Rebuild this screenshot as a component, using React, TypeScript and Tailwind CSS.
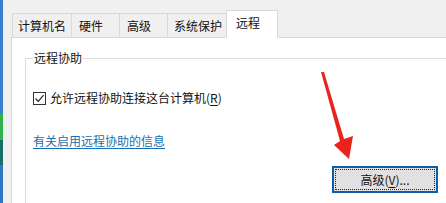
import React from "react";

const tabs = [
  { label: "计算机名", w: "w-[59px]", pl: "pl-[5px]" },
  { label: "硬件", w: "w-[48px]", pl: "pl-[7px]" },
  { label: "高级", w: "w-[48px]", pl: "pl-[7px]" },
  { label: "系统保护", w: "w-[59px]", pl: "pl-[6px]" },
];

export default function App() {
  return (
    <div className="relative flex h-[203px] w-[446px] overflow-hidden bg-[#f0f0f0] font-['Noto_Sans_CJK_SC',sans-serif] text-[12px] text-[#111]">
      {/* desktop edge behind the dialog */}
      <div className="flex w-[3px] shrink-0 flex-col">
        <div className="h-[113px] bg-[#3a7fce]" />
        <div className="h-[27px] bg-[#2fb24c]" />
        <div className="h-[25px] bg-[#166e68]" />
        <div className="flex-1 bg-[#2f78c6]" />
      </div>

      <div className="flex min-w-0 flex-1 flex-col pl-[8px] pt-[10px]">
        <div className="flex h-[27px] items-end pl-[1px]">
          {tabs.map((t) => (
            <div
              key={t.label}
              className={`flex h-[24px] shrink-0 items-center border-l border-t border-[#d9d9d9] bg-[#f0f0f0] leading-[16px] ${t.w} ${t.pl}`}
            >
              {t.label}
            </div>
          ))}
          <div className="relative z-10 -mb-px flex h-[28px] w-[52px] shrink-0 items-start border-x border-t border-[#d9d9d9] bg-white pl-[9px] pt-[4px] leading-[16px]">
            远程
          </div>
        </div>

        <div className="min-w-0 flex-1 overflow-hidden border-l border-t border-[#d9d9d9] bg-white pl-[13px] pt-[12px]">
          <fieldset className="w-[440px] border border-[#dcdcdc] pb-[30px] pl-[7px]">
            <legend className="px-[1px] leading-[16px]">远程协助</legend>

            <div className="mt-[24px] flex h-[16px] items-center gap-[4px] leading-[16px]">
              <div className="flex h-[13px] w-[13px] items-center justify-center border border-[#333] bg-white">
                <svg width="11" height="11" viewBox="0 0 11 11">
                  <path d="M1.5 5.5 L4.2 8.3 L9.6 2.2" fill="none" stroke="#222" strokeWidth="1.2" />
                </svg>
              </div>
              <span>
                允许远程协助连接这台计算机(<span className="underline underline-offset-2">R</span>)
              </span>
            </div>

            <div className="mt-[27px] h-[16px] leading-[16px]">
              <a className="text-[#1a6fb0] underline underline-offset-2">有关启用远程协助的信息</a>
            </div>

            <button className="ml-[299px] mt-[17px] flex h-[27px] w-[106px] border-2 border-[#0b5fa8] bg-[#e1e1e1] p-px">
              <span className="flex h-full w-full items-center justify-center border border-dotted border-[#222] leading-[16px]">
                高级(<span className="underline underline-offset-2">V</span>)...
              </span>
            </button>
          </fieldset>
        </div>
      </div>

      {/* red annotation arrow */}
      <svg
        className="absolute left-[315px] top-[66px]"
        width="45"
        height="98"
        viewBox="0 0 45 98"
      >
        <polygon points="6,6 9,6 29,73 38,70 34,93 19,79 25,75" fill="#e8241c" />
      </svg>
    </div>
  );
}
